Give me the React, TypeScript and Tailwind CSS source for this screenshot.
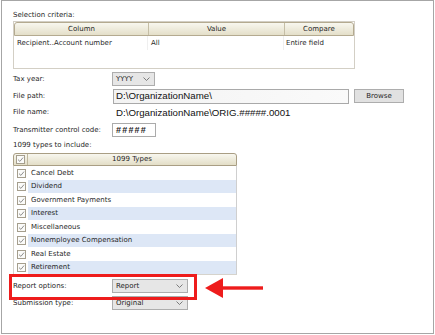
import React from "react";

const font = { fontFamily: '"DejaVu Sans", Verdana, sans-serif' };
const pathFont = { fontFamily: '"Liberation Sans", Arial, sans-serif' };

function Chevron() {
  return (
    <svg width="7" height="4" viewBox="0 0 7 4" className="shrink-0">
      <polyline points="0.5,0.5 3.5,3.5 6.5,0.5" fill="none" stroke="#6e6e6e" strokeWidth="0.9" />
    </svg>
  );
}

function Check() {
  return (
    <span className="flex h-[9px] w-[9px] items-center justify-center border border-[#a59e8d] bg-[#fbfbf9]">
      <svg width="7" height="7" viewBox="0 0 7 7">
        <polyline points="1,3.6 2.9,5.4 6,1.6" fill="none" stroke="#8e8e8e" strokeWidth="1" />
      </svg>
    </span>
  );
}

const types = [
  "Cancel Debt",
  "Dividend",
  "Government Payments",
  "Interest",
  "Miscellaneous",
  "Nonemployee Compensation",
  "Real Estate",
  "Retirement",
];

export default function App() {
  return (
    <div className="relative h-[335px] w-[435px] bg-white text-[#1f1f1f]" style={font}>
      <div className="ml-[1px] flex h-[334px] w-[433px] flex-col border border-[#a6a6a6] pl-[11px]">
        {/* Selection criteria */}
        <div className="mt-[8px] flex h-[12px] items-center text-[7px] leading-none">Selection criteria:</div>
        <div className="flex h-[48px] w-[342px] flex-col border border-[#d3cfc5] bg-white">
          <div className="flex h-[14px] rounded-t-[3px] border border-[#b4aa90] bg-gradient-to-b from-[#f8f7ef] to-[#e4dfc9] text-[7px] leading-none">
            <div className="flex w-[134px] items-center justify-center border-r border-[#c5bea6]">Column</div>
            <div className="flex w-[136px] items-center justify-center border-r border-[#c5bea6]">Value</div>
            <div className="flex flex-1 items-center justify-center">Compare</div>
          </div>
          <div className="flex h-[14px] text-[7px] leading-none">
            <div className="flex w-[134px] items-center border-r border-[#efefef] pl-[3px]">Recipient..Account number</div>
            <div className="flex w-[136px] items-center border-r border-[#efefef] pl-[3px]">All</div>
            <div className="flex flex-1 items-center pl-[2px]">Entire field</div>
          </div>
        </div>

        {/* Tax year */}
        <div className="mt-[2px] flex h-[16px] items-center">
          <div className="w-[99px] text-[7px] leading-none">Tax year:</div>
          <div className="flex h-[14px] w-[43px] items-center justify-between border border-[#adadad] bg-[#e6e6e6] pl-[3px] pr-[4px] text-[7px] leading-none">
            <span>YYYY</span>
            <Chevron />
          </div>
        </div>

        {/* File path */}
        <div className="flex h-[18px] items-center">
          <div className="w-[100px] text-[7px] leading-none">File path:</div>
          <div
            className="flex h-[15px] w-[236px] items-center border border-[#a9a9a9] bg-gradient-to-r from-[#f3f3f3] to-[#fafafa] pl-[2px] text-[9.7px] leading-none text-[#111]"
            style={pathFont}
          >
            D:\OrganizationName\
          </div>
          <div className="ml-[5px] flex h-[14px] w-[50px] items-center justify-center border border-[#adadad] bg-[#e1e1e1] text-[7px] leading-none">
            Browse
          </div>
        </div>

        {/* File name */}
        <div className="flex h-[15px] items-center">
          <div className="w-[100px] text-[7px] leading-none">File name:</div>
          <div className="pl-[3px] text-[9.7px] leading-none text-[#111]" style={pathFont}>
            D:\OrganizationName\ORIG.#####.0001
          </div>
        </div>

        {/* Transmitter */}
        <div className="mt-[1px] flex h-[18px] items-center">
          <div className="w-[99px] text-[7px] leading-none">Transmitter control code:</div>
          <div
            className="flex h-[14px] w-[44px] items-center border border-[#ababab] bg-white pl-[3px] text-[9px] font-bold leading-none tracking-[1.2px] text-[#222]"
            style={pathFont}
          >
            #####
          </div>
        </div>

        <div className="flex h-[13px] items-center text-[7px] leading-none">1099 types to include:</div>

        {/* 1099 types */}
        <div className="mt-[1px] flex w-[224px] flex-col">
          <div className="flex h-[13px] rounded-t-[3px] border border-[#a99e84] bg-gradient-to-b from-[#f8f7ef] to-[#e3dec7] text-[7px] leading-none">
            <div className="flex w-[14px] items-center justify-center border-r border-[#c0b89e]">
              <Check />
            </div>
            <div className="flex flex-1 items-center justify-center">1099 Types</div>
          </div>
          <div className="flex flex-col border-x border-b border-x-[#d6d3cc] border-b-[#d6d3cc] border-r-[#cfcfcf]">
            {types.map((t, i) => (
              <div key={t} className={`flex ${i % 2 === 0 ? "h-[14px]" : "h-[13px]"} text-[7px] leading-none`}>
                <div className="flex w-[14px] items-center justify-center bg-white">
                  <Check />
                </div>
                <div
                  className={`flex flex-1 items-center pl-[3px] ${i % 2 === 1 ? "bg-[#dde7f6]" : "bg-white"}`}
                >
                  {t}
                </div>
              </div>
            ))}
          </div>
        </div>

        {/* Report options */}
        <div className="mt-[3px] flex h-[16px] items-center">
          <div className="w-[99px] text-[7px] leading-none">Report options:</div>
          <div className="flex h-[14px] w-[76px] items-center justify-between border border-[#adadad] bg-[#e6e6e6] pl-[3px] pr-[4px] text-[7px] leading-none">
            <span>Report</span>
            <Chevron />
          </div>
        </div>

        {/* Submission type */}
        <div className="mt-[1px] flex h-[16px] items-center">
          <div className="w-[99px] text-[7px] leading-none">Submission type:</div>
          <div className="flex h-[14px] w-[76px] items-center justify-between border border-[#adadad] bg-[#e6e6e6] pl-[3px] pr-[4px] text-[7px] leading-none">
            <span>Original</span>
            <Chevron />
          </div>
        </div>
      </div>

      {/* Annotation overlay */}
      <div className="absolute left-[9px] top-[274px] h-[26px] w-[188px] border-[3px] border-[#ee1c1c]" />
      <svg className="absolute left-[204px] top-[277px]" width="60" height="22" viewBox="0 0 60 22">
        <polygon points="1,11 19,1 19,21" fill="#ee1c1c" />
        <rect x="18" y="9.3" width="41" height="3.4" fill="#ee1c1c" />
      </svg>
    </div>
  );
}
